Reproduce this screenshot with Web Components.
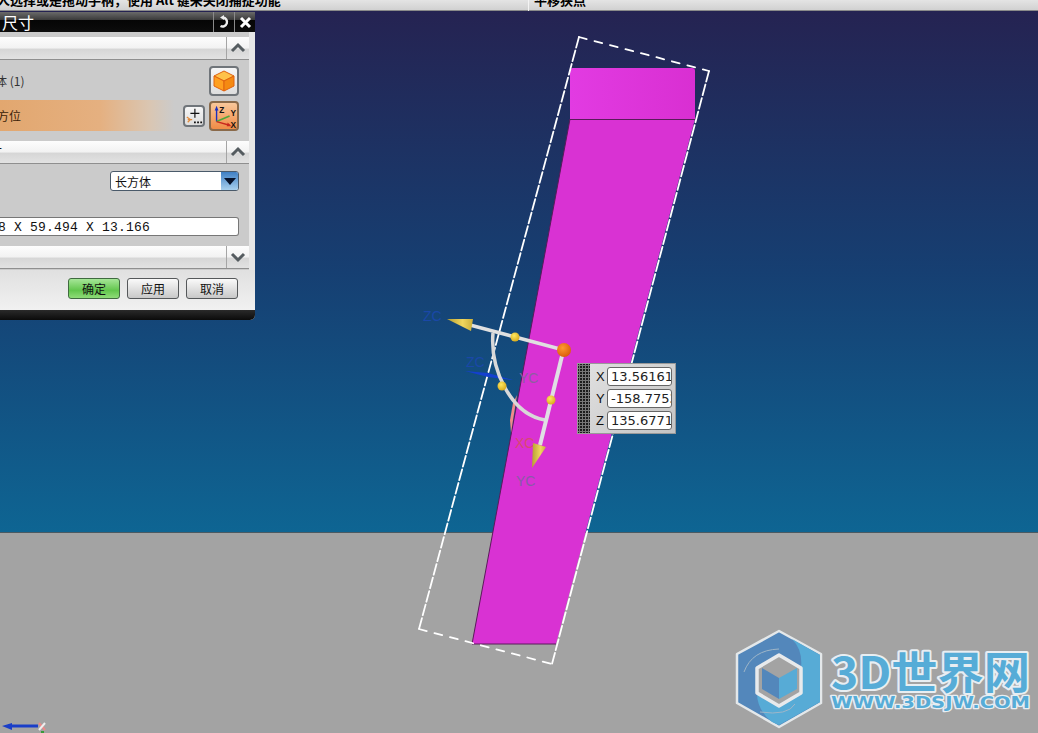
<!DOCTYPE html>
<html>
<head>
<meta charset="utf-8">
<title>尺寸</title>
<style>
	html, body { margin: 0; padding: 0; height: 100%; overflow: hidden; background: #a3a3a3; }
	body { display: flex; flex-direction: column; font-family: "Liberation Sans", "Noto Sans CJK SC", sans-serif; }
</style>
</head>
<body>
<status-bar left="人选择或是拖动手柄，使用 Alt 键来关闭捕捉功能" right="平移狭点"></status-bar>
<cad-viewport>
	<nx-dialog heading="尺寸">
		<nx-section></nx-section>
		<nx-row kind="plain" label="体 (1)"><nx-icon-button icon="cube"></nx-icon-button></nx-row>
		<nx-row kind="active" label="方位">
			<nx-icon-button icon="plus" small></nx-icon-button>
			<nx-icon-button icon="csys" active></nx-icon-button>
		</nx-row>
		<nx-section label="寸"></nx-section>
		<nx-select value="长方体"></nx-select>
		<nx-readout value="8 X 59.494 X 13.166"></nx-readout>
		<nx-section collapsed></nx-section>
	</nx-dialog>
	<coord-box x="13.56161" y="-158.7753" z="135.6771"></coord-box>
	<site-logo></site-logo>
</cad-viewport>

<script>
const cjk = '"Noto Sans CJK SC", "Liberation Sans", sans-serif';

class StatusBar extends HTMLElement {
	connectedCallback() {
		const shadow = this.attachShadow({mode: 'open'});
		shadow.innerHTML = `<style>
			:host { display: flex; flex: none; height: 11px; overflow: hidden; background: linear-gradient(#e4e4e4, #cfcfcf); box-shadow: inset 0 -1px 0 #8a8a8a; color: #000; font: 700 13px ${cjk}; white-space: nowrap; }
			div { line-height: 13px; margin-top: -7px; }
			.left { width: 532px; box-sizing: border-box; border-right: 1px solid #f4f4f4; margin-left: -3px; height: 30px; }
			.right { padding-left: 5px; }
		</style>
		<div class="left">${this.getAttribute('left')}</div>
		<div class="right">${this.getAttribute('right')}</div>`;
	}
}

class CadViewport extends HTMLElement {
	connectedCallback() {
		const shadow = this.attachShadow({mode: 'open'});
		shadow.innerHTML = `<style>
			:host { display: block; position: relative; flex: 1; overflow: hidden; }
			svg { display: block; width: 100%; height: 100%; }
			text { font-family: "Liberation Sans", sans-serif; font-size: 14px; }
		</style>
		<svg viewBox="0 11 1038 722" xmlns="http://www.w3.org/2000/svg">
			<defs>
				<linearGradient id="sky" x1="0" y1="0" x2="0" y2="1">
					<stop offset="0" stop-color="#252352"/>
					<stop offset="0.5" stop-color="#163f72"/>
					<stop offset="1" stop-color="#0e6593"/>
				</linearGradient>
				<linearGradient id="cap" x1="0" y1="0" x2="1" y2="0">
					<stop offset="0" stop-color="#e23be2"/>
					<stop offset="1" stop-color="#d92fd2"/>
				</linearGradient>
				<linearGradient id="cone" x1="0" y1="0" x2="1" y2="0">
					<stop offset="0" stop-color="#b7a032"/>
					<stop offset="0.6" stop-color="#f0d65e"/>
					<stop offset="1" stop-color="#c9ae3c"/>
				</linearGradient>
				<radialGradient id="ball" cx="0.4" cy="0.35" r="0.7">
					<stop offset="0" stop-color="#ffe860"/>
					<stop offset="1" stop-color="#d8a818"/>
				</radialGradient>
				<radialGradient id="origin" cx="0.4" cy="0.35" r="0.7">
					<stop offset="0" stop-color="#ff9a30"/>
					<stop offset="1" stop-color="#d85a08"/>
				</radialGradient>
			</defs>
			<rect x="0" y="11" width="1038" height="521" fill="url(#sky)"/>
			<rect x="0" y="532" width="1038" height="201" fill="#a3a3a3"/>
			<line x1="0" y1="532.5" x2="1038" y2="532.5" stroke="#4a5a62"/>

			<!-- block -->
			<polygon points="570,119 695,119 556,644 472,644" fill="#d932d3"/>
			<path d="M570,119 L472,644 H556" fill="none" stroke="#5a1a5a"/>
			<path d="M570,71 Q570,68 573,68 H692 Q695,68 695,71 V119 H570 Z" fill="url(#cap)"/>
			<line x1="570" y1="119.5" x2="695" y2="119.5" stroke="#5a1a5a"/>

			<!-- dashed bounds, the long sides have shorter gaps -->
			<g fill="none" stroke="#fff" stroke-width="1.800" stroke-linecap="round">
				<path d="M579,37 L709,71" stroke-dasharray="8 8"/>
				<path d="M419,629 L552,664" stroke-dasharray="8 8"/>
				<path d="M579,37 L419,629" stroke-dasharray="11 3"/>
				<path d="M709,71 L552,664" stroke-dasharray="11 3"/>
			</g>

			<!-- dynamic handles -->
			<polygon points="517,395 511,433 510,420 513,403" fill="#f08a8a"/>
			<text x="423" y="321" fill="#1a48a8">ZC</text>
			<text x="466" y="367" fill="#1a48a8">ZC</text>
			<path d="M465,371 L488,373 L513,380 L488,377 Z" fill="#1440d0"/>
			<text x="519" y="383" fill="#8e5ea0">YC</text>
			<text x="515" y="448" fill="#d84a70">XC</text>
			<text x="516" y="486" fill="#8a5aa8">YC</text>
			<path d="M493,333 C490,368 510,414 545,420" fill="none" stroke="#d8d8d8" stroke-width="3.500"/>
			<line x1="470" y1="325" x2="560" y2="349" stroke="#e0e0e0" stroke-width="3.500"/>
			<line x1="563" y1="352" x2="540" y2="445" stroke="#e0dfe4" stroke-width="4"/>
			<polygon points="447,319 473,319 471,331" fill="url(#cone)"/>
			<polygon points="532,468 533,443 546,447" fill="url(#cone)"/>
			<circle cx="515" cy="337" r="4.500" fill="url(#ball)"/>
			<circle cx="502" cy="386" r="4.500" fill="url(#ball)"/>
			<circle cx="551" cy="400" r="4.500" fill="url(#ball)"/>
			<circle cx="564" cy="350" r="7" fill="url(#origin)"/>

			<!-- work triad -->
			<line x1="8" y1="726" x2="38" y2="726" stroke="#1a3ec8" stroke-width="3"/>
			<polygon points="2,726 12,723 12,730" fill="#1a3ec8"/>
			<line x1="39" y1="723" x2="45" y2="730" stroke="#e88" stroke-width="2"/>
			<line x1="45" y1="723" x2="39" y2="730" stroke="#eee" stroke-width="2"/>
			<rect x="41" y="731" width="3" height="2" fill="#3a9a3a"/>
		</svg>
		<slot></slot>`;
	}
}

class NxDialog extends HTMLElement {
	connectedCallback() {
		const shadow = this.attachShadow({mode: 'open'});
		shadow.innerHTML = `<style>
			:host { display: flex; flex-direction: column; position: absolute; left: 0; top: 1px; width: 255px; height: 308px; overflow: hidden; border-bottom-right-radius: 5px; background: #e6e6e6; font: 12px ${cjk}; color: #111; }
			.title { flex: none; height: 20px; display: flex; align-items: stretch; background: linear-gradient(#6a6a6a 0, #3c3c3c 38%, #050505 40%, #0c0c0c 100%); color: #fff; font-size: 16px; line-height: 20px; }
			.title span { flex: 1; padding-left: 2px; }
			.title i { flex: none; display: flex; align-items: center; justify-content: center; width: 20px; border-left: 1px solid #8a8a8a; }
			.body { flex: none; height: 238px; margin-right: 6px; padding-top: 5px; box-sizing: border-box; background: #cbcbcb; display: flex; flex-direction: column; }
			.foot { flex: 1; display: flex; justify-content: flex-end; gap: 7px; padding: 8px 17px 0 0; background: linear-gradient(#e0e0e0, #f1f1f1); }
			.base { flex: none; height: 10px; background: linear-gradient(#2a2a2a, #0b0b0b); }
			button { width: 52px; height: 21px; padding: 0; box-sizing: border-box; border: 1px solid #55585a; border-radius: 3px; background: linear-gradient(#fafafa, #dcdcdc 60%, #c8c8c8); font: 12px ${cjk}; color: #111; }
			button.ok { background: linear-gradient(#a6e698, #62c64d 60%, #8fdc78); border-color: #3f6b3f; }
		</style>
		<div class="title">
			<span>${this.getAttribute('heading')}</span>
			<i><svg width="14" height="14" viewBox="0 0 14 14"><path d="M6,2.500 A4.500,4.500 0 1 1 3.500,11" fill="none" stroke="#eee" stroke-width="2.400"/><polygon points="3,2.500 7,0 7,5" fill="#eee"/></svg></i>
			<i><svg width="13" height="13" viewBox="0 0 13 13"><path d="M2,2 L11,11 M11,2 L2,11" stroke="#fff" stroke-width="3"/></svg></i>
		</div>
		<div class="body"><slot></slot></div>
		<div class="foot">
			<button class="ok">确定</button>
			<button>应用</button>
			<button>取消</button>
		</div>
		<div class="base"></div>`;
	}
}

class NxSection extends HTMLElement {
	connectedCallback() {
		const shadow = this.attachShadow({mode: 'open'});
		const chevron = this.hasAttribute('collapsed') ? 'M4,5 L10,11 L16,5' : 'M4,11 L10,5 L16,11';
		shadow.innerHTML = `<style>
			:host { display: flex; height: 23px; margin-bottom: 1px; box-sizing: border-box; border-bottom: 1px solid #8f8f8f; background: linear-gradient(#fdfdfd, #f2f2f2 50%, #d6d6d6 55%, #e2e2e2); overflow: hidden; font: 12px ${cjk}; }
			span { flex: 1; line-height: 20px; margin-left: -10px; }
			i { flex: none; width: 22px; border-left: 1px solid #a5a5a5; display: flex; align-items: center; justify-content: center; }
		</style>
		<span>${this.getAttribute('label') || ''}</span>
		<i><svg width="20" height="16" viewBox="0 0 20 16"><path d="${chevron}" fill="none" stroke="#555c60" stroke-width="3"/></svg></i>`;
	}
}

class NxRow extends HTMLElement {
	connectedCallback() {
		const shadow = this.attachShadow({mode: 'open'});
		const active = this.getAttribute('kind') === 'active';
		shadow.innerHTML = `<style>
			:host { display: flex; align-items: center; gap: 4px; height: ${active ? 31 : 40}px; box-sizing: border-box; padding-right: 10px; margin-bottom: ${active ? 10 : 0}px; overflow: hidden; font: 12px ${cjk}; ${active ? 'background: linear-gradient(90deg, #e2a76f 0, #e5b080 40%, #dac6b2 60%, #cbcbcb 70%);' : ''} }
			span { flex: 1; margin-left: ${active ? -3 : -5}px; ${active ? 'color: #3a1d08;' : 'color: #333;'} white-space: nowrap; }
		</style>
		<span>${this.getAttribute('label')}</span>
		<slot></slot>`;
	}
}

const nxIcons = {
	cube: `<svg width="24" height="24" viewBox="0 0 24 24"><polygon points="12,2 22,7 12,12 2,7" fill="#ffc24a" stroke="#e0620f"/><polygon points="2,7 12,12 12,22 2,17" fill="#ffa020" stroke="#e0620f"/><polygon points="22,7 12,12 12,22 22,17" fill="#f58a12" stroke="#e0620f"/></svg>`,
	plus: `<svg width="20" height="20" viewBox="0 0 20 20"><path d="M11,2 V12 M6,7 H16" stroke="#111" stroke-width="1.300"/><path d="M2,11 L6,14 L3,17 M3,14 H8" fill="none" stroke="#e08a3c" stroke-width="1.400"/><path d="M10,17 h2 M13.500,17 h2 M17,17 h2" stroke="#111" stroke-width="2"/></svg>`,
	csys: `<svg width="28" height="28" viewBox="0 0 28 28"><path d="M6,20 V7" stroke="#1a2fc0" stroke-width="1.500"/><polygon points="6,3 4,8 8,8" fill="#1a2fc0"/><path d="M6,20 L20,14" stroke="#4da83a" stroke-width="1.800"/><path d="M6,20 L20,24" stroke="#c8281e" stroke-width="1.500"/><polygon points="22,25 17,25 18,21" fill="#c8281e"/><text x="9" y="11" font-family="Liberation Sans" font-weight="700" font-size="9" fill="#111">Z</text><text x="21" y="14" font-family="Liberation Sans" font-weight="700" font-size="9" fill="#111">Y</text><text x="21" y="27" font-family="Liberation Sans" font-weight="700" font-size="9" fill="#111">X</text></svg>`
};

class NxIconButton extends HTMLElement {
	connectedCallback() {
		const shadow = this.attachShadow({mode: 'open'});
		const small = this.hasAttribute('small');
		const active = this.hasAttribute('active');
		const size = small ? 22 : 30;
		shadow.innerHTML = `<style>
			:host { display: flex; align-items: center; justify-content: center; flex: none; width: ${size}px; height: ${size}px; box-sizing: border-box; border: 2px solid ${active ? '#8a6a4a' : '#70757a'}; border-radius: 4px; background: ${active ? 'linear-gradient(#f8c79a, #f08c46)' : 'linear-gradient(#f6f6f6, #dedede)'}; }
			svg { display: block; }
		</style>${nxIcons[this.getAttribute('icon')]}`;
	}
}

class NxSelect extends HTMLElement {
	connectedCallback() {
		const shadow = this.attachShadow({mode: 'open'});
		shadow.innerHTML = `<style>
			:host { display: flex; width: 129px; height: 21px; margin: 6px 0 0 110px; box-sizing: border-box; border: 1px solid #4a5a6a; border-radius: 3px; background: #fff; font: 12px/19px ${cjk}; color: #111; overflow: hidden; }
			span { flex: 1; padding-left: 4px; }
			i { flex: none; width: 17px; display: flex; align-items: center; justify-content: center; background: linear-gradient(#3f7fc4, #a8d0ee); }
		</style>
		<span>${this.getAttribute('value')}</span>
		<i><svg width="12" height="7" viewBox="0 0 12 7"><polygon points="0,0 12,0 6,7" fill="#07122a"/></svg></i>`;
	}
}

class NxReadout extends HTMLElement {
	connectedCallback() {
		const shadow = this.attachShadow({mode: 'open'});
		shadow.innerHTML = `<style>
			:host { display: block; width: 239px; height: 19px; margin: 26px 0 10px; box-sizing: border-box; border: 1px solid #777; border-left: 0; border-radius: 0 3px 3px 0; background: #fff; font: 13px/19px "Liberation Mono", monospace; letter-spacing: 0.200px; text-indent: -2px; color: #111; white-space: nowrap; overflow: hidden; }
		</style>${this.getAttribute('value')}`;
	}
}

class CoordBox extends HTMLElement {
	connectedCallback() {
		const shadow = this.attachShadow({mode: 'open'});
		const field = function(axis, value) {
			return `<label>${axis}</label><output>${value}</output>`;
		};
		shadow.innerHTML = `<style>
			:host { display: flex; position: absolute; left: 577px; top: 352px; width: 99px; height: 71px; box-sizing: border-box; border: 1px solid #999; background: linear-gradient(135deg, #e2e2e2, #c4c4c4); }
			.grip { flex: none; width: 12px; margin-right: 6px; background: radial-gradient(circle, #777 1px, transparent 1.400px) 0 0 / 3px 3px, #1c1c1c; }
			.grid { display: grid; grid-template-columns: 11px 65px; grid-auto-rows: 19px; row-gap: 3px; align-content: center; }
			label { font: 13px/19px "Liberation Sans", sans-serif; color: #111; }
			output { box-sizing: border-box; padding-left: 3px; border: 1px solid #666; border-radius: 3px; background: #fff; font: 13px/17px "DejaVu Sans", sans-serif; color: #222; overflow: hidden; white-space: nowrap; }
		</style>
		<div class="grip"></div>
		<div class="grid">
			${field('X', this.getAttribute('x'))}
			${field('Y', this.getAttribute('y'))}
			${field('Z', this.getAttribute('z'))}
		</div>`;
	}
}

class SiteLogo extends HTMLElement {
	connectedCallback() {
		const shadow = this.attachShadow({mode: 'open'});
		shadow.innerHTML = `<style>
			:host { display: block; position: absolute; right: 0; bottom: 0; width: 313px; height: 113px; }
			svg { display: block; }
			text { paint-order: stroke; stroke: #e8eef2; stroke-linejoin: round; fill: #56acd7; }
		</style>
		<svg width="313" height="113" viewBox="725 620 313 113" xmlns="http://www.w3.org/2000/svg">
			<polygon points="779,631 821,654 821,703 779,727 737,703 737,654" fill="#5387bb" stroke="#e4e8ea" stroke-width="2.500" stroke-linejoin="round"/>
			<path d="M792,639 L820,655 L820,702 L779,725 L772,722 Q757,710 757,693 L779,706 L801,693 L801,668 Q803,650 792,639 Z" fill="#57abd6"/>
			<path d="M744,672 Q752,650 779,649 M795,704 Q788,716 760,712" fill="none" stroke="#9fb6c8" stroke-width="1"/>
			<polygon points="779,655 801,668 801,693 779,706 757,693 757,668" fill="#a3a3a3" stroke="#e8eaec" stroke-width="3.500" stroke-linejoin="round"/>
			<polygon points="762,668 779,678 779,699 762,689" fill="#5387bb"/>
			<polygon points="797,668 779,678 779,699 797,689" fill="#57abd6"/>
			<text x="831" y="689" font-family="Noto Sans CJK SC, sans-serif" font-weight="700" font-size="44" stroke-width="4" textLength="199" lengthAdjust="spacingAndGlyphs">3D世界网</text>
			<text x="831" y="708" font-family="DejaVu Sans, sans-serif" font-weight="700" font-size="15" stroke-width="2.500" textLength="199" lengthAdjust="spacingAndGlyphs">WWW.3DSJW.COM</text>
		</svg>`;
	}
}

customElements.define('status-bar', StatusBar);
customElements.define('cad-viewport', CadViewport);
customElements.define('nx-dialog', NxDialog);
customElements.define('nx-section', NxSection);
customElements.define('nx-row', NxRow);
customElements.define('nx-icon-button', NxIconButton);
customElements.define('nx-select', NxSelect);
customElements.define('nx-readout', NxReadout);
customElements.define('coord-box', CoordBox);
customElements.define('site-logo', SiteLogo);
</script>
</body>
</html>
